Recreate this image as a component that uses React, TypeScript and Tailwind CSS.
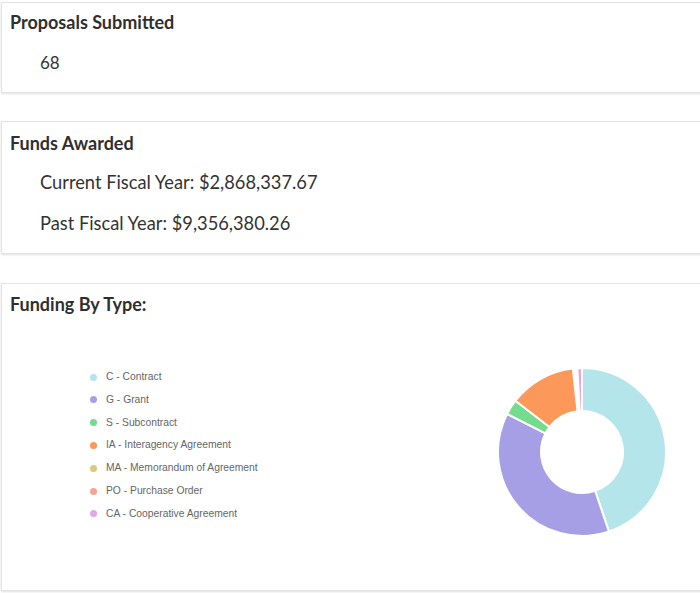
import React from "react";

type Seg = { label: string; color: string; start: number; end: number };

const legend = [
  { label: "C - Contract", color: "#b3e5ea" },
  { label: "G - Grant", color: "#a79fe6" },
  { label: "S - Subcontract", color: "#74dc8d" },
  { label: "IA - Interagency Agreement", color: "#fb985a" },
  { label: "MA - Memorandum of Agreement", color: "#d8cc6e" },
  { label: "PO - Purchase Order", color: "#f6a496" },
  { label: "CA - Cooperative Agreement", color: "#e0a8e8" },
];

const segs: Seg[] = [
  { label: "C", color: "#b3e5ea", start: 0, end: 161.3 },
  { label: "G", color: "#a79fe6", start: 161.3, end: 296.9 },
  { label: "S", color: "#74dc8d", start: 296.9, end: 307.6 },
  { label: "IA", color: "#fb985a", start: 307.6, end: 353.7 },
  { label: "CA", color: "#e0a8e8", start: 356.8, end: 360 },
];

function pt(cx: number, cy: number, r: number, deg: number) {
  const a = ((deg - 90) * Math.PI) / 180;
  return [cx + r * Math.cos(a), cy + r * Math.sin(a)];
}

function arcPath(cx: number, cy: number, ro: number, ri: number, s: number, e: number) {
  const large = e - s > 180 ? 1 : 0;
  const [x1, y1] = pt(cx, cy, ro, s);
  const [x2, y2] = pt(cx, cy, ro, e);
  const [x3, y3] = pt(cx, cy, ri, e);
  const [x4, y4] = pt(cx, cy, ri, s);
  return `M${x1} ${y1} A${ro} ${ro} 0 ${large} 1 ${x2} ${y2} L${x3} ${y3} A${ri} ${ri} 0 ${large} 0 ${x4} ${y4} Z`;
}

function Donut() {
  return (
    <svg width="172" height="172" viewBox="0 0 172 172">
      {segs.map((s) => (
        <path
          key={s.label}
          d={arcPath(86, 86, 84, 41, s.start, s.end)}
          fill={s.color}
          stroke="#ffffff"
          strokeWidth="2"
          strokeLinejoin="round"
        />
      ))}
    </svg>
  );
}

export default function App() {
  return (
    <div className="w-[700px] h-[593px] overflow-hidden bg-white pl-px text-[#333333] font-['Lato','Open_Sans',sans-serif]">
      {/* Card 1 */}
      <div className="mt-[2px] w-[720px] border border-[#e3e3e3] bg-white shadow-[0_1px_2px_rgba(0,0,0,0.12)] pt-[8px] pb-[17px] pl-[8px]">
        <div className="text-[18px] leading-[22px] font-bold text-[#2f2f2f]">Proposals Submitted</div>
        <div className="mt-[18px] pl-[30px] text-[17px] leading-[24px]">68</div>
      </div>

      {/* Card 2 */}
      <div className="mt-[28px] w-[720px] border border-[#e3e3e3] bg-white shadow-[0_1px_2px_rgba(0,0,0,0.12)] pt-[10px] pb-[18px] pl-[8px]">
        <div className="text-[18px] leading-[22px] font-bold text-[#2f2f2f]">Funds Awarded</div>
        <div className="mt-[16px] pl-[30px] text-[18.3px] leading-[24px]">Current Fiscal Year: $2,868,337.67</div>
        <div className="mt-[17px] pl-[30px] text-[18.3px] leading-[24px]">Past Fiscal Year: $9,356,380.26</div>
      </div>

      {/* Card 3 */}
      <div className="mt-[29px] w-[720px] h-[308px] border border-[#e3e3e3] bg-white shadow-[0_1px_2px_rgba(0,0,0,0.12)] pt-[9px] pl-[8px]">
        <div className="text-[18px] leading-[22px] font-bold text-[#2f2f2f]">Funding By Type:</div>
        <div className="flex items-start">
          <div className="ml-[80px] mt-[50.6px] flex w-[200px] flex-col font-['Liberation_Sans',Arial,sans-serif] text-[10.3px] text-[#666666]">
            {legend.map((l) => (
              <div key={l.label} className="flex h-[22.83px] items-center">
                <span className="h-[7px] w-[7px] shrink-0 rounded-full" style={{ backgroundColor: l.color }} />
                <span className="ml-[9px] leading-none whitespace-nowrap">{l.label}</span>
              </div>
            ))}
          </div>
          <div className="ml-[206px] mt-[51px] shrink-0">
            <Donut />
          </div>
        </div>
      </div>
    </div>
  );
}
